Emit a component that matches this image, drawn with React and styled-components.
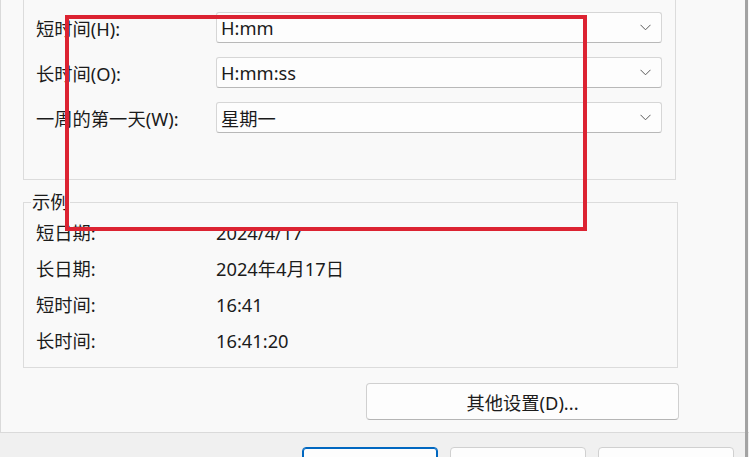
import React from 'react'
import styled, { createGlobalStyle } from 'styled-components'

const GlobalStyle = createGlobalStyle`
  html, body {
    margin: 0;
    padding: 0;
    background: #f0f0f0;
    overflow: hidden;
  }
  body {
    font-family: "Noto Sans", "Noto Sans CJK SC", sans-serif;
    color: #1b1b1b;
  }
`

const Window = styled.div`
  position: relative;
  width: 749px;
  height: 457px;
  display: flex;
  overflow: hidden;
  background: #f0f0f0;
`

const Main = styled.div`
  width: 745px;
  display: flex;
  flex-direction: column;
`

const EdgeLine = styled.div`
  width: 3px;
  background: #a3a3a3;
`

const Panel = styled.div`
  width: 730px;
  background: #f9f9f9;
  border: 1px solid #dadada;
  border-top: none;
  padding: 0 0 12px 22px;
  box-sizing: content-box;
`

const FormatGroup = styled.div`
  width: 653px;
  height: 180px;
  border: 1px solid #dcdcdc;
  border-top: none;
  padding: 12px 13px 0 12px;
  box-sizing: border-box;
  display: grid;
  grid-template-columns: 180px 1fr;
  grid-auto-rows: 31px;
  row-gap: 14px;
  align-items: center;
`

const Label = styled.div`
  font-size: 18.3px;
  white-space: nowrap;
`

const Combo = styled.div`
  height: 31px;
  box-sizing: border-box;
  background: #fdfdfd;
  border: 1px solid #d6d6d6;
  border-bottom-color: #b8b8b8;
  border-radius: 3px;
  display: flex;
  align-items: center;
  justify-content: space-between;
  padding: 0 10px 0 4px;
  font-size: 18.3px;
`

const ExampleGroup = styled.fieldset`
  width: 655px;
  margin: 10px 0 0 0;
  padding: 0 12px 9px 12px;
  border: 1px solid #dcdcdc;
  box-sizing: border-box;
  min-width: 0;
`

const Legend = styled.legend`
  font-size: 18.3px;
  line-height: 24px;
  padding: 0 1px;
  margin-left: -5px;
`

const ExampleRow = styled.div`
  display: grid;
  grid-template-columns: 180px 1fr;
  height: 36px;
  align-items: center;
  font-size: 18.3px;
`

const WideButton = styled.button`
  display: flex;
  align-items: center;
  justify-content: center;
  width: 313px;
  height: 37px;
  margin: 15px 0 0 343px;
  background: #fdfdfd;
  border: 1px solid #d0d0d0;
  border-bottom-color: #b5b5b5;
  border-radius: 4px;
  font-family: inherit;
  font-size: 18.3px;
  color: #1b1b1b;
  padding: 0;
`

const Footer = styled.div`
  display: flex;
  justify-content: flex-end;
  gap: 12px;
  padding: 14px 11px 0 0;
`

const DialogButton = styled.button`
  width: 136px;
  height: 36px;
  flex: none;
  background: #fdfdfd;
  border: 1px solid ${(p) => (p.$primary ? '#0067c0' : '#d0d0d0')};
  box-shadow: ${(p) => (p.$primary ? 'inset 0 0 0 1px #0067c0' : 'none')};
  border-radius: 4px;
  padding: 0;
`

const Highlight = styled.div`
  position: absolute;
  left: 65px;
  top: 15px;
  width: 522px;
  height: 216px;
  box-sizing: border-box;
  border: 4px solid #dc2332;
  pointer-events: none;
`

function Chevron() {
  return (
    <svg width="11" height="7" viewBox="0 0 11 7" fill="none">
      <path d="M0.5 0.8 L5.5 5.8 L10.5 0.8" stroke="#5a5a5a" strokeWidth="1" />
    </svg>
  )
}

const formats = [
  { label: '短时间(H):', value: 'H:mm' },
  { label: '长时间(O):', value: 'H:mm:ss' },
  { label: '一周的第一天(W):', value: '星期一' },
]

const examples = [
  { label: '短日期:', value: '2024/4/17' },
  { label: '长日期:', value: '2024年4月17日' },
  { label: '短时间:', value: '16:41' },
  { label: '长时间:', value: '16:41:20' },
]

export default function App() {
  return (
    <>
      <GlobalStyle />
      <Window>
        <Main>
          <Panel>
            <FormatGroup>
              {formats.map((f) => (
                <React.Fragment key={f.label}>
                  <Label>{f.label}</Label>
                  <Combo>
                    <span>{f.value}</span>
                    <Chevron />
                  </Combo>
                </React.Fragment>
              ))}
            </FormatGroup>
            <ExampleGroup>
              <Legend>示例</Legend>
              {examples.map((e) => (
                <ExampleRow key={e.label}>
                  <span>{e.label}</span>
                  <span>{e.value}</span>
                </ExampleRow>
              ))}
            </ExampleGroup>
            <WideButton>其他设置(D)...</WideButton>
          </Panel>
          {/* dialog buttons: only their top edges are in view */}
          <Footer>
            <DialogButton $primary />
            <DialogButton />
            <DialogButton />
          </Footer>
        </Main>
        <EdgeLine />
        <Highlight />
      </Window>
    </>
  )
}
